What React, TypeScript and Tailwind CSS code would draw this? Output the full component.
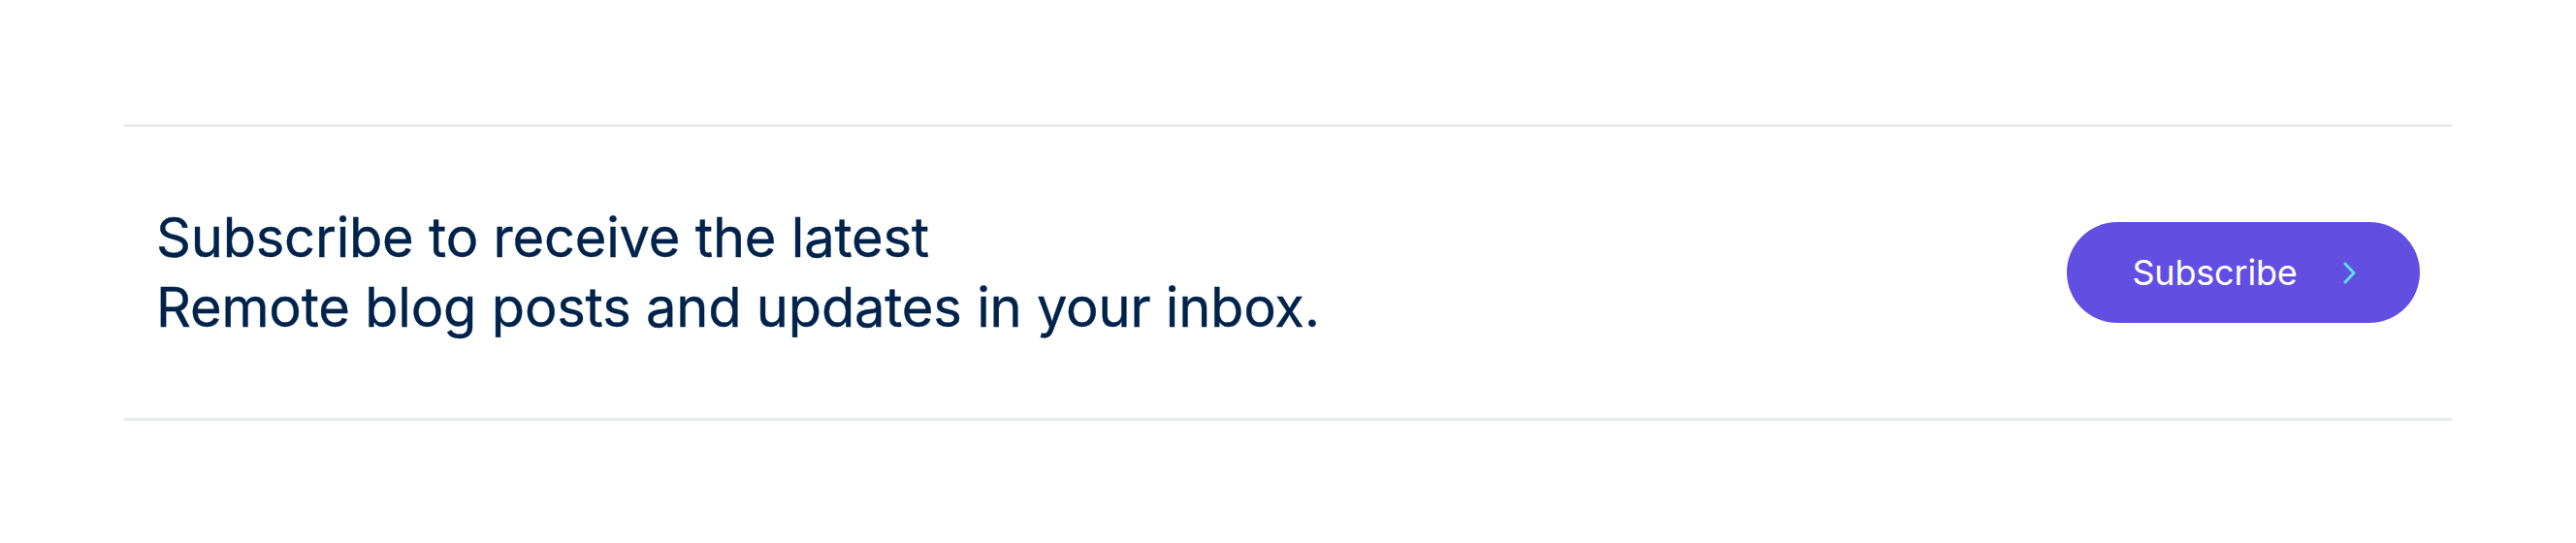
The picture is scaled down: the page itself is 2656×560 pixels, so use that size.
export default function App() {
  return (
    <div className="w-full min-h-[560px] bg-white pt-[128px] font-['Inter',sans-serif]">
      <div className="mx-auto w-[2400px] border-y-[3px] border-[#e8eaed] h-[306px] flex items-center justify-between px-[33px]">
        <p className="text-[#00234b] text-[56px] leading-[72px] font-normal tracking-[-0.2px] [-webkit-text-stroke:0.4px_#00234b]">
          Subscribe to receive the latest
          <br />
          Remote blog posts and updates in your inbox.
        </p>
        <button
          type="button"
          className="w-[364px] h-[104px] rounded-full bg-[#624fe1] flex items-center justify-center gap-[46px] pl-[2px] text-white text-[36px] tracking-[-0.2px]"
        >
          <span>Subscribe</span>
          <svg width="15" height="24" viewBox="0 0 15 24" fill="none">
            <path d="M3 3 L12 12.5 L3 22" stroke="#5ce1e6" strokeWidth="3" strokeLinecap="round" strokeLinejoin="round" />
          </svg>
        </button>
      </div>
    </div>
  );
}
